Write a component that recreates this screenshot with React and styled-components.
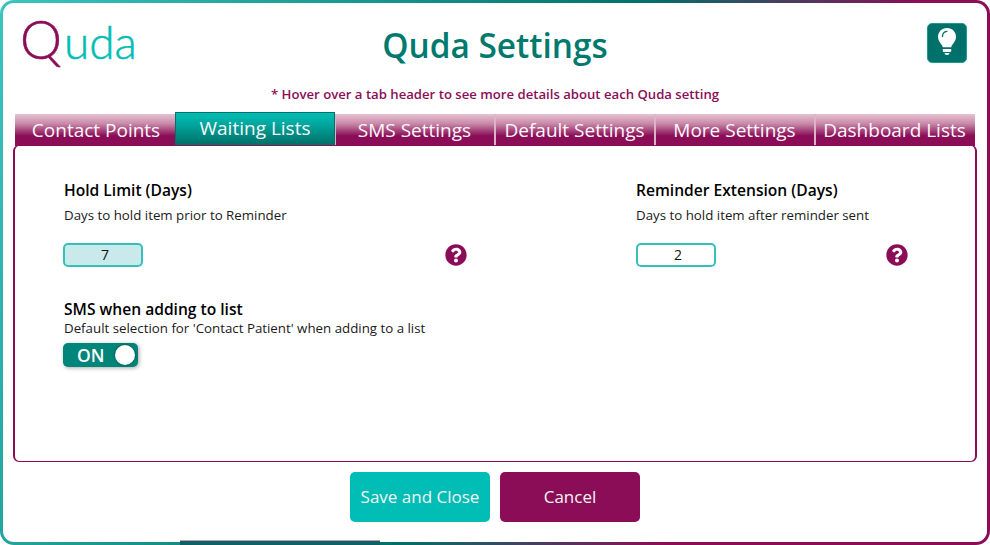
import React from 'react'
import styled, { createGlobalStyle } from 'styled-components'
import { FaQuestionCircle } from 'react-icons/fa'

const GlobalStyle = createGlobalStyle`
*{
  margin: 0;
  padding: 0;
  box-sizing: border-box;
}
body{
  background-color: #ffffff;
  font-family: "Open Sans", "Noto Sans", sans-serif;
}
`
const Frame = styled.div`
  width: 990px;
  height: 545px;
  padding: 3px;
  position: relative;
  border-radius: 14px;
  background: linear-gradient(115deg, #3cc4c0 0%, #00716a 52%, #8b0d57 74%, #8b0d57 100%);
  &::after{
    content: "";
    position: absolute;
    left: 180px;
    bottom: 0;
    width: 200px;
    height: 4px;
    border-top: 1px solid #c39ab5;
    background-color: #0f6064;
  }
`
const Sheet = styled.div`
  width: 100%;
  height: 100%;
  padding: 0 10px 0 10px;
  border-radius: 11px;
  background-color: #ffffff;
  display: flex;
  flex-direction: column;
`
const Header = styled.header`
  height: 78px;
  display: grid;
  grid-template-columns: 1fr auto 1fr;
  align-items: start;
`
const Logo = styled.div`
  padding: 5px 0 0 7px;
  font-family: "Lato", sans-serif;
  font-weight: 300;
  font-size: 46px;
  line-height: 62px;
  color: #00bdb5;
  -webkit-text-stroke: 0.5px currentColor;
`
const LogoQ = styled.span`
  font-size: 53px;
  margin-right: 2px;
  color: #8b0d57;
`
const Title = styled.h1`
  padding-top: 19px;
  font-size: 33.4px;
  line-height: 46px;
  font-weight: 600;
  color: #00796f;
`
const HelpButton = styled.button`
  justify-self: end;
  margin: 20px 10px 0 0;
  width: 40px;
  height: 40px;
  border: 1px solid #1a9c93;
  border-radius: 5px;
  background-color: #00716a;
  display: flex;
  align-items: center;
  justify-content: center;
`
const Hint = styled.p`
  height: 33px;
  padding-top: 1px;
  text-align: center;
  font-size: 13.15px;
  line-height: 24px;
  font-weight: 600;
  color: #8b0d57;
`
const TabRow = styled.div`
  height: 32px;
  margin: 0 2px;
  display: flex;
`
const Tab = styled.div`
  width: ${p => (p.$first || p.$active ? '160px' : '161px')};
  height: 32px;
  margin-left: ${p => (p.$first || p.$active ? '0' : '-1px')};
  position: relative;
  z-index: 0;
  display: flex;
  align-items: center;
  justify-content: center;
  padding: 0 ${p => (p.$first ? '0' : '2px')} 1px 0;
  font-size: 19px;
  color: #fbf8fa;
  white-space: nowrap;
  border-left: 2px solid ${p => (p.$first ? 'transparent' : '#dcb3c7')};
  background: linear-gradient(180deg, #e6c2d3 0%, #c98aa9 30%, #8b0d57 68%, #8b0d57 100%);
  ${p => p.$active && `
    height: 33px;
    margin-top: -2px;
    padding: 0 0 1px 0;
    z-index: 2;
    border: 1px solid #00716a;
    background: linear-gradient(180deg, #00bdb3 0%, #00a89f 35%, #00716a 100%);
  `}
`
const Panel = styled.section`
  height: 317px;
  margin-top: -1px;
  position: relative;
  z-index: 1;
  border: 1px solid #8b0d57;
  border-left-width: 2px;
  border-right-width: 2px;
  border-radius: 6px;
  background-color: #ffffff;
  padding: 34px 48px 0 49px;
`
const FieldGrid = styled.div`
  display: grid;
  grid-template-columns: 403px 272px;
  column-gap: 169px;
`
const FieldTitle = styled.h3`
  font-size: 15.6px;
  line-height: 20px;
  font-weight: 600;
  color: #000000;
`
const FieldText = styled.p`
  margin-top: ${p => (p.$tight ? '-1px' : '5px')};
  font-size: 13.3px;
  line-height: 20px;
  color: #1a1a1a;
`
const InputRow = styled.div`
  margin-top: 18px;
  display: flex;
  align-items: center;
  justify-content: space-between;
`
const NumberBox = styled.div`
  width: 80px;
  height: 24px;
  margin-left: ${p => (p.$filled ? '-1px' : '0')};
  padding-left: 4px;
  border: 2px solid #36c0bb;
  border-radius: 5px;
  background-color: ${p => (p.$filled ? '#c9e9ea' : '#ffffff')};
  text-align: center;
  font-size: 14px;
  line-height: 20px;
  color: #111111;
`
const HelpIcon = styled(FaQuestionCircle)`
  width: 22px;
  height: 22px;
  color: #8b0d57;
`
const SmsBlock = styled.div`
  margin-top: 32px;
`
const Toggle = styled.div`
  width: 75px;
  height: 24px;
  margin: 5px 0 0 -1px;
  padding: 0 3px 0 14px;
  border-radius: 5px;
  background-color: #00857a;
  box-shadow: 1px 1px 4px rgba(0, 0, 0, 0.35);
  display: flex;
  align-items: center;
  justify-content: space-between;
  font-size: 17.5px;
  font-weight: 600;
  color: #ffffff;
`
const Knob = styled.span`
  width: 20px;
  height: 20px;
  border-radius: 50%;
  background-color: #ffffff;
  box-shadow: 0 0 3px rgba(0, 0, 0, 0.5);
`
const Footer = styled.footer`
  margin-top: 10px;
  display: flex;
  justify-content: center;
  gap: 10px;
`
const ActionButton = styled.button`
  width: 140px;
  height: 50px;
  padding-bottom: 2px;
  border: none;
  border-radius: 5px;
  font-family: inherit;
  font-size: 17px;
  color: #f5f5f5;
  background-color: ${p => (p.$primary ? '#00bdb5' : '#8b0d57')};
`

const BulbIcon = () => (
  <svg width="20" height="32" viewBox="0 0 20 32">
    <path d="M10 1C4.7 1 1 5 1 9.8c0 3 1.3 4.9 2.7 6.7 1 1.3 1.8 2.4 2 3.7h8.600c.2-1.300 1-2.400 2-3.700 1.400-1.800 2.700-3.700 2.700-6.700C19 5 15.300 1 10 1z" fill="#ffffff" />
    <path d="M5.500 9.500C5.500 6.500 7.500 4.600 10 4.400" fill="none" stroke="#00716a" strokeWidth="1.300" strokeLinecap="round" />
    <path d="M5.800 22h8.400v1.800c0 .8-.5 1.200-1.200 1.200h-6c-.7 0-1.200-.4-1.200-1.200z" fill="#ffffff" />
    <path d="M7.500 26h5c0 1.200-1 2-2.500 2s-2.500-.8-2.500-2z" fill="#ffffff" />
  </svg>
)

const tabs = ['Contact Points', 'Waiting Lists', 'SMS Settings', 'Default Settings', 'More Settings', 'Dashboard Lists']

export default function App() {
  return (
    <Frame>
      <GlobalStyle />
      <Sheet>
        <Header>
          <Logo><LogoQ>Q</LogoQ>uda</Logo>
          <Title>Quda Settings</Title>
          <HelpButton><BulbIcon /></HelpButton>
        </Header>
        <Hint>* Hover over a tab header to see more details about each Quda setting</Hint>
        <TabRow>
          {tabs.map((t, i) => (
            <Tab key={t} $first={i === 0} $active={t === 'Waiting Lists'}>{t}</Tab>
          ))}
        </TabRow>
        <Panel>
          <FieldGrid>
            <div>
              <FieldTitle>Hold Limit (Days)</FieldTitle>
              <FieldText>Days to hold item prior to Reminder</FieldText>
              <InputRow>
                <NumberBox $filled>7</NumberBox>
                <HelpIcon />
              </InputRow>
            </div>
            <div>
              <FieldTitle>Reminder Extension (Days)</FieldTitle>
              <FieldText>Days to hold item after reminder sent</FieldText>
              <InputRow>
                <NumberBox>2</NumberBox>
                <HelpIcon />
              </InputRow>
            </div>
          </FieldGrid>
          <SmsBlock>
            <FieldTitle>SMS when adding to list</FieldTitle>
            <FieldText $tight>Default selection for 'Contact Patient' when adding to a list</FieldText>
            <Toggle>ON<Knob /></Toggle>
          </SmsBlock>
        </Panel>
        <Footer>
          <ActionButton $primary>Save and Close</ActionButton>
          <ActionButton>Cancel</ActionButton>
        </Footer>
      </Sheet>
    </Frame>
  )
}
